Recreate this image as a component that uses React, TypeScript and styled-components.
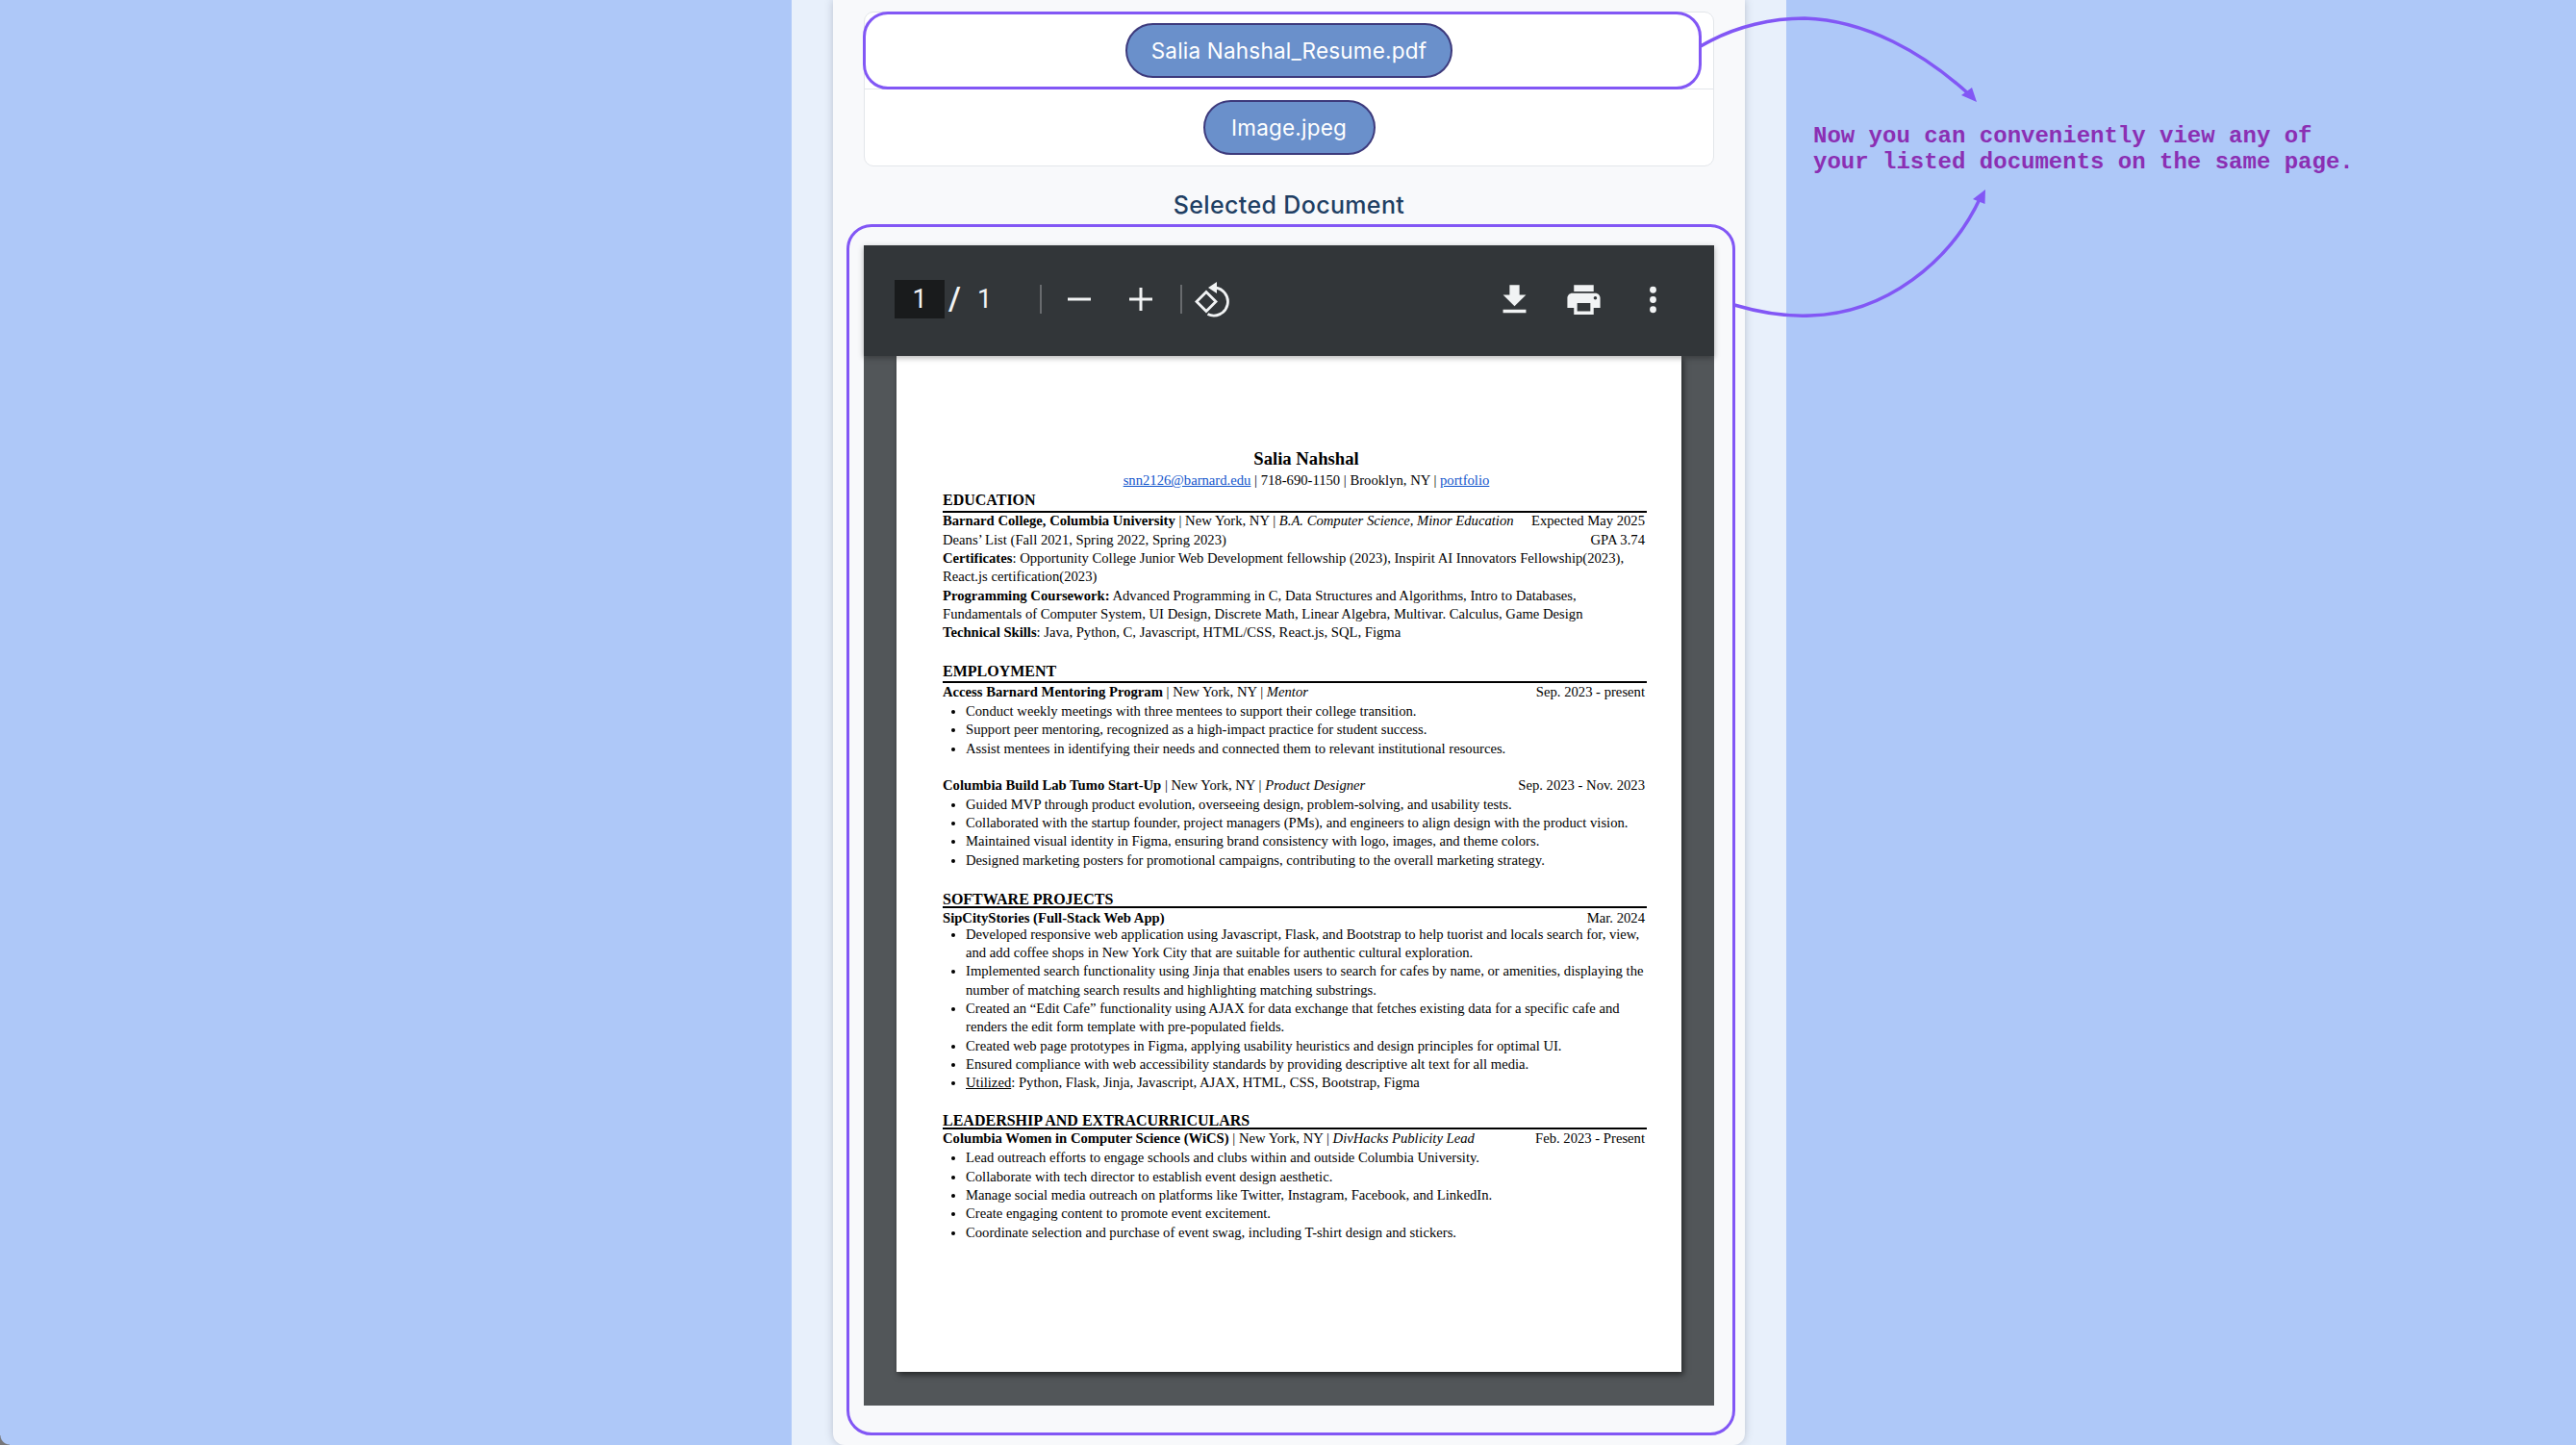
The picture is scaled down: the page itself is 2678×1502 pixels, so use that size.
import styled, { createGlobalStyle } from 'styled-components';

const GlobalStyle = createGlobalStyle`
  html, body {
    margin: 0;
    padding: 0;
    background: #aec8f8;
    overflow: hidden;
  }
`;

const Stage = styled.div`
  position: relative;
  display: grid;
  grid-template-columns: 823px 1034px 1fr;
  width: 2678px;
  height: 1502px;
  overflow: hidden;
  background: #aec8f8;
`;

const Band = styled.div`
  display: flex;
  justify-content: center;
  background: #e8f0fb;
`;

const Card = styled.main`
  box-sizing: border-box;
  width: 948px;
  height: 1502px;
  padding: 12px 32px 0;
  background: #f8f9fb;
  border-radius: 0 0 12px 12px;
  box-shadow: 0 0 8px rgba(60, 70, 90, 0.28);
`;

const FileList = styled.ul`
  margin: 0;
  padding: 0;
  list-style: none;
  background: #fff;
  border: 1px solid #e3e6ea;
  border-radius: 10px;
`;

const FileRow = styled.li`
  display: flex;
  align-items: center;
  justify-content: center;
  height: 79px;
  & + & {
    border-top: 1px solid #e3e6ea;
  }
`;

const FilePill = styled.button`
  box-sizing: border-box;
  height: 57px;
  width: ${(p) => p.$width}px;
  padding: 0;
  font: 400 22.5px Inter, 'Noto Sans', sans-serif;
  letter-spacing: 0.2px;
  color: #fff;
  background: #6a90cb;
  border: 2px solid #3d3a7c;
  border-radius: 29px;
`;

const SectionTitle = styled.h2`
  margin: 26px 0 27px;
  font: 500 25px/29px Inter, 'Noto Sans', sans-serif;
  letter-spacing: 0.35px;
  color: #1f3f63;
  text-align: center;
`;

const Viewer = styled.section`
  display: flex;
  flex-direction: column;
  height: 1206px;
  background: #525659;
`;

const Toolbar = styled.div`
  position: relative;
  z-index: 1;
  flex: none;
  box-sizing: border-box;
  display: flex;
  align-items: center;
  height: 115px;
  padding: 0 43px 3px 32px;
  color: #f1f3f4;
  background: #323639;
  box-shadow: 0 2px 6px rgba(0, 0, 0, 0.3);
`;

const PageBox = styled.div`
  width: 52px;
  height: 40px;
  font: 400 27px/40px Roboto, sans-serif;
  text-align: center;
  background: #191b1c;
`;

const PageCount = styled.div`
  display: flex;
  gap: 17px;
  width: 99px;
  padding-left: 4px;
  box-sizing: border-box;
  font: 400 27px/40px Roboto, sans-serif;
`;

const Slash = styled.span`
  font-size: 33px;
  font-weight: 500;
`;

const ToolDivider = styled.div`
  flex: none;
  width: 2px;
  height: 30px;
  margin-right: ${(p) => p.$after}px;
  background: #686b6e;
`;

const ZoomGroup = styled.div`
  display: flex;
  gap: 40px;
  margin-right: 29px;
`;

const ToolGroup = styled.div`
  display: flex;
  gap: 31px;
  margin-left: auto;
`;

const ToolIcon = styled.svg`
  display: block;
  flex: none;
  fill: currentColor;
`;

const ScrollArea = styled.div`
  flex: 1;
  min-height: 0;
  padding: 0 34px 35px;
`;

const PdfPage = styled.article`
  box-sizing: border-box;
  height: 100%;
  padding: 96px 36px 0 48px;
  color: #000;
  background: #fff;
  box-shadow: 2px 3px 6px rgba(0, 0, 0, 0.55);
  font: 400 14.67px/19.33px 'Liberation Serif', 'Times New Roman', serif;
`;

const ResumeName = styled.h1`
  margin: 0;
  padding-left: 24px;
  font: 700 18.67px/22px 'Liberation Serif', serif;
  text-align: center;
`;

const Contact = styled.div`
  margin-top: 2.3px;
  padding-left: 24px;
  text-align: center;
`;

const Mail = styled.a`
  color: #1155cc;
  text-decoration: underline;
`;

const Heading = styled.h3`
  margin: ${(p) => p.$top}px 0 ${(p) => p.$bottom}px;
  padding-bottom: ${(p) => p.$pad}px;
  font: 700 16px/${(p) => p.$line}px 'Liberation Serif', serif;
  border-bottom: 2.5px solid #000;
`;

const Line = styled.div`
  display: flex;
  justify-content: space-between;
  margin-top: ${(p) => p.$top || 0}px;
  padding-right: 2px;
  white-space: nowrap;
`;

const Bullets = styled.ul`
  margin: ${(p) => p.$top || 0}px 0 0;
  padding: 0 0 0 24px;
  list-style: disc;
`;

const Highlight = styled.div`
  position: absolute;
  left: ${(p) => p.$x}px;
  top: ${(p) => p.$y}px;
  box-sizing: border-box;
  width: ${(p) => p.$w}px;
  height: ${(p) => p.$h}px;
  border: 3px solid #8257f5;
  border-radius: ${(p) => p.$r}px;
  pointer-events: none;
`;

const Arrows = styled.svg`
  position: absolute;
  left: 0;
  top: 0;
  pointer-events: none;
`;

const Callout = styled.p`
  margin: 128px 0 0 28px;
  font: 700 24px/27px 'Liberation Mono', 'Courier New', monospace;
  color: #8b2fb3;
  white-space: pre;
`;

const WindowCorner = styled.div`
  position: absolute;
  left: 0;
  bottom: 0;
  width: 10px;
  height: 10px;
  background: radial-gradient(circle at 100% 0, transparent 9px, #77777a 10px);
`;

export default function App() {
  return (
    <>
      <GlobalStyle />
      <Stage>
        <div />
        <Band>
          <Card>
            <FileList>
              <FileRow>
                <FilePill $width={340}>Salia Nahshal_Resume.pdf</FilePill>
              </FileRow>
              <FileRow>
                <FilePill $width={179}>Image.jpeg</FilePill>
              </FileRow>
            </FileList>
            <SectionTitle>Selected Document</SectionTitle>
            <Viewer>
              <Toolbar>
                <PageBox>1</PageBox>
                <PageCount>
                  <Slash>/</Slash>
                  <span>1</span>
                </PageCount>
                <ToolDivider $after={27} />
                <ZoomGroup>
                  <ToolIcon width="24" height="24" viewBox="0 0 24 24">
                    <rect x="0" y="10.5" width="24" height="3" />
                  </ToolIcon>
                  <ToolIcon width="24" height="24" viewBox="0 0 24 24">
                    <path d="M0 10.5h10.5V0h3v10.5H24v3H13.5V24h-3V13.5H0z" />
                  </ToolIcon>
                </ZoomGroup>
                <ToolDivider $after={11} />
                <ToolIcon width="40" height="40" viewBox="0 0 40 40">
                  <path d="M14 12.5l10 10-10 10L4 22.5z" fill="none" stroke="currentColor" strokeWidth="2.8" />
                  <path d="M22 8A14.5 14.5 0 1 1 15.5 35.5" fill="none" stroke="currentColor" strokeWidth="2.8" />
                  <path d="M16 8L25 2v12z" />
                </ToolIcon>
                <ToolGroup>
                  <ToolIcon width="41" height="41" viewBox="0 0 24 24">
                    <path d="M19 9h-4V3H9v6H5l7 7 7-7zM5 18v2h14v-2H5z" />
                  </ToolIcon>
                  <ToolIcon width="41" height="41" viewBox="0 0 24 24">
                    <path d="M19 8H5c-1.66 0-3 1.34-3 3v6h4v4h12v-4h4v-6c0-1.66-1.34-3-3-3zm-3 11H8v-5h8v5zm3-7c-.55 0-1-.45-1-1s.45-1 1-1 1 .45 1 1-.45 1-1 1zm-1-9H6v4h12V3z" />
                  </ToolIcon>
                  <ToolIcon width="41" height="41" viewBox="0 0 24 24">
                    <circle cx="12" cy="6" r="2" />
                    <circle cx="12" cy="12" r="2" />
                    <circle cx="12" cy="18" r="2" />
                  </ToolIcon>
                </ToolGroup>
              </Toolbar>
              <ScrollArea>
                <PdfPage>
                  <ResumeName>Salia Nahshal</ResumeName>
                  <Contact>
                    <Mail>snn2126@barnard.edu</Mail> | 718-690-1150 | Brooklyn, NY | <Mail>portfolio</Mail>
                  </Contact>

                  <Heading $top={0.8} $bottom={-0.5} $pad={1.5} $line={19}>EDUCATION</Heading>
                  <Line>
                    <span><b>Barnard College, Columbia University</b> | New York, NY | <i>B.A. Computer Science, Minor Education</i></span>
                    <span>Expected May 2025</span>
                  </Line>
                  <Line>
                    <span>Deans’ List (Fall 2021, Spring 2022, Spring 2023)</span>
                    <span>GPA 3.74</span>
                  </Line>
                  <Line><span><b>Certificates</b>: Opportunity College Junior Web Development fellowship (2023), Inspirit AI Innovators Fellowship(2023),</span></Line>
                  <Line><span>React.js certification(2023)</span></Line>
                  <Line><span><b>Programming Coursework:</b> Advanced Programming in C, Data Structures and Algorithms, Intro to Databases,</span></Line>
                  <Line><span>Fundamentals of Computer System, UI Design, Discrete Math, Linear Algebra, Multivar. Calculus, Game Design</span></Line>
                  <Line><span><b>Technical Skills</b>: Java, Python, C, Javascript, HTML/CSS, React.js, SQL, Figma</span></Line>

                  <Heading $top={20.2} $bottom={-0.5} $pad={1.5} $line={19}>EMPLOYMENT</Heading>
                  <Line>
                    <span><b>Access Barnard Mentoring Program</b> | New York, NY | <i>Mentor</i></span>
                    <span>Sep. 2023 - present</span>
                  </Line>
                  <Bullets $top={0.9}>
                    <li>Conduct weekly meetings with three mentees to support their college transition.</li>
                    <li>Support peer mentoring, recognized as a high-impact practice for student success.</li>
                    <li>Assist mentees in identifying their needs and connected them to relevant institutional resources.</li>
                  </Bullets>
                  <Line $top={18.5}>
                    <span><b>Columbia Build Lab Tumo Start-Up</b> | New York, NY | <i>Product Designer</i></span>
                    <span>Sep. 2023 - Nov. 2023</span>
                  </Line>
                  <Bullets $top={0.7}>
                    <li>Guided MVP through product evolution, overseeing design, problem-solving, and usability tests.</li>
                    <li>Collaborated with the startup founder, project managers (PMs), and engineers to align design with the product vision.</li>
                    <li>Maintained visual identity in Figma, ensuring brand consistency with logo, images, and theme colors.</li>
                    <li>Designed marketing posters for promotional campaigns, contributing to the overall marketing strategy.</li>
                  </Bullets>

                  <Heading $top={23.6} $bottom={1.7} $pad={0} $line={14}>SOFTWARE PROJECTS</Heading>
                  <Line>
                    <span><b>SipCityStories (Full-Stack Web App)</b></span>
                    <span>Mar. 2024</span>
                  </Line>
                  <Bullets $top={-2.9}>
                    <li>Developed responsive web application using Javascript, Flask, and Bootstrap to help tuorist and locals search for, view,<br />and add coffee shops in New York City that are suitable for authentic cultural exploration.</li>
                    <li>Implemented search functionality using Jinja that enables users to search for cafes by name, or amenities, displaying the<br />number of matching search results and highlighting matching substrings.</li>
                    <li>Created an “Edit Cafe” functionality using AJAX for data exchange that fetches existing data for a specific cafe and<br />renders the edit form template with pre-populated fields.</li>
                    <li>Created web page prototypes in Figma, applying usability heuristics and design principles for optimal UI.</li>
                    <li>Ensured compliance with web accessibility standards by providing descriptive alt text for all media.</li>
                    <li><u>Utilized</u>: Python, Flask, Jinja, Javascript, AJAX, HTML, CSS, Bootstrap, Figma</li>
                  </Bullets>

                  <Heading $top={21.2} $bottom={0.7} $pad={0} $line={15}>LEADERSHIP AND EXTRACURRICULARS</Heading>
                  <Line>
                    <span><b>Columbia Women in Computer Science (WiCS)</b> | New York, NY | <i>DivHacks Publicity Lead</i></span>
                    <span>Feb. 2023 - Present</span>
                  </Line>
                  <Bullets $top={0.6}>
                    <li>Lead outreach efforts to engage schools and clubs within and outside Columbia University.</li>
                    <li>Collaborate with tech director to establish event design aesthetic.</li>
                    <li>Manage social media outreach on platforms like Twitter, Instagram, Facebook, and LinkedIn.</li>
                    <li>Create engaging content to promote event excitement.</li>
                    <li>Coordinate selection and purchase of event swag, including T-shirt design and stickers.</li>
                  </Bullets>
                </PdfPage>
              </ScrollArea>
            </Viewer>
          </Card>
        </Band>
        <Callout>{'Now you can conveniently view any of\nyour listed documents on the same page.'}</Callout>

        <Highlight $x={897} $y={12} $w={872} $h={81} $r={26} />
        <Highlight $x={880} $y={233} $w={924} $h={1259} $r={26} />
        <Arrows width="2678" height="1502" viewBox="0 0 2678 1502">
          <path d="M1768 48C1805 26 1845 19 1876 19C1940 21 2000 55 2048 99" fill="none" stroke="#8257f5" strokeWidth="3.5" />
          <path d="M2055 106L2039 99L2050 91z" fill="#8257f5" />
          <path d="M1803 317C1830 325 1858 329 1882 328C1960 326 2028 272 2059 205" fill="none" stroke="#8257f5" strokeWidth="3.5" />
          <path d="M2064 197L2051 207L2063.5 212z" fill="#8257f5" />
        </Arrows>
        <WindowCorner />
      </Stage>
    </>
  );
}
